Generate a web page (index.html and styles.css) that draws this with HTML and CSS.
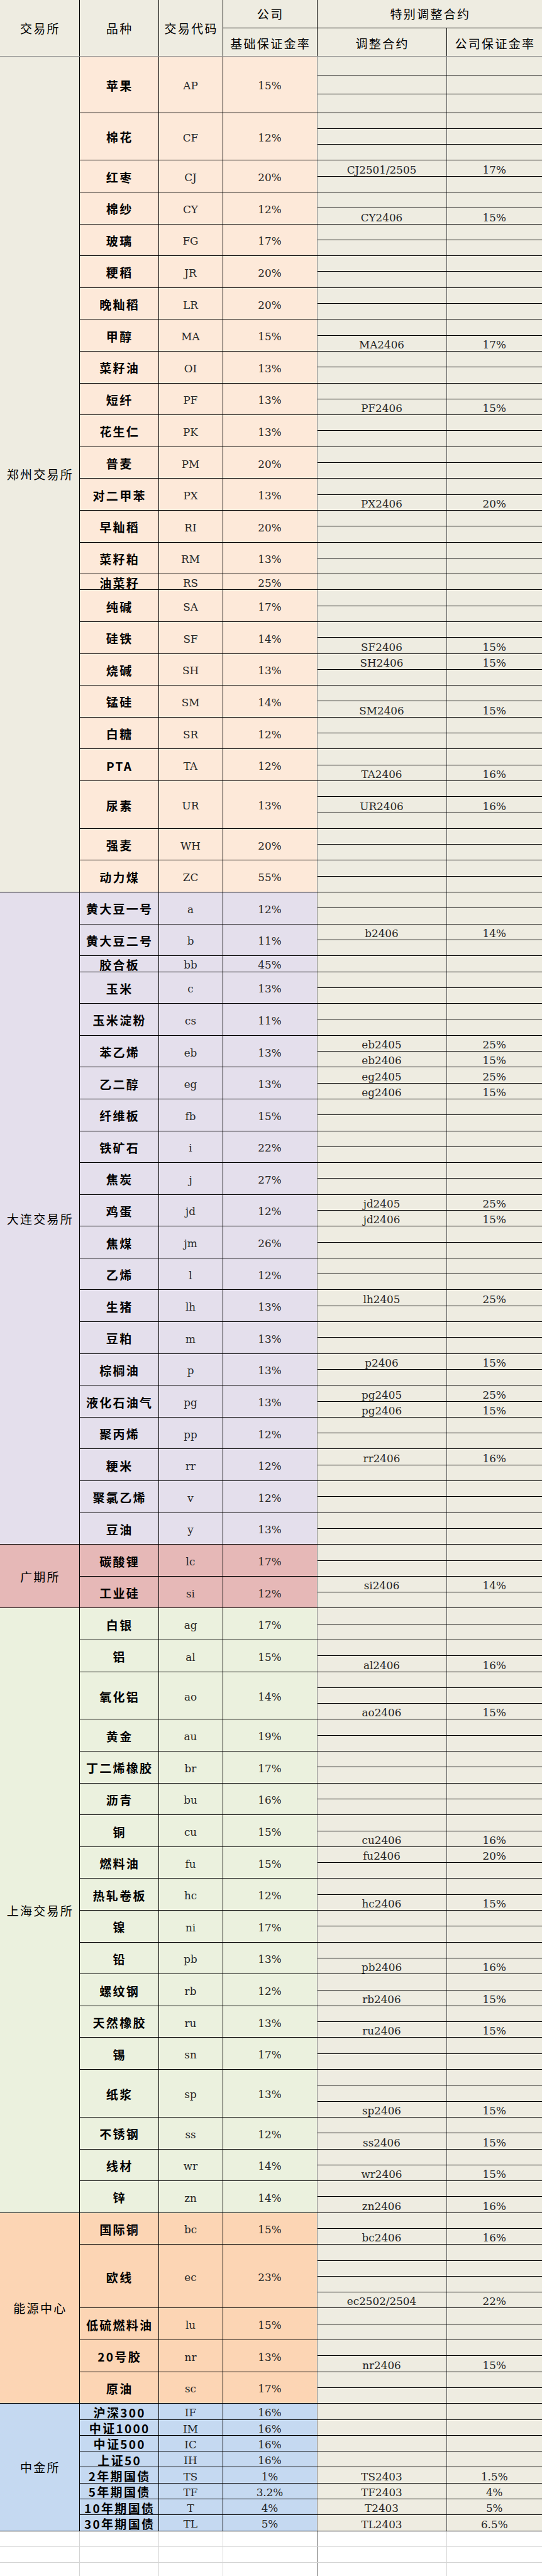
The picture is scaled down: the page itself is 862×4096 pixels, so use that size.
FILE: index.html
```html
<!DOCTYPE html>
<html lang="zh-CN">
<head>
<meta charset="utf-8">
<title>保证金率</title>
<link rel="stylesheet" href="styles.css">
</head>
<body>
<table class="sheet">
<colgroup><col class="w1"><col class="w2"><col class="w3"><col class="w4"><col class="w5"><col class="w6"></colgroup>
<thead>
<tr class="h1"><th rowspan="2" class="first low">交易所</th><th rowspan="2" class="low">品种</th><th rowspan="2" class="low">交易代码</th><th>公司</th><th colspan="2" class="last">特别调整合约</th></tr>
<tr class="h2"><th class="low sub">基础保证金率</th><th class="low sub">调整合约</th><th class="low sub last">公司保证金率</th></tr>
</thead>
<tbody class="g zz">
<tr class="ra"><td rowspan="52">郑州交易所</td><td rowspan="3">苹果</td><td rowspan="3">AP</td><td rowspan="3">15%</td><td></td><td></td></tr>
<tr class="ra"><td></td><td></td></tr>
<tr class="ra"><td></td><td></td></tr>
<tr><td rowspan="3">棉花</td><td rowspan="3">CF</td><td rowspan="3">12%</td><td></td><td></td></tr>
<tr><td></td><td></td></tr>
<tr><td></td><td></td></tr>
<tr><td rowspan="2">红枣</td><td rowspan="2">CJ</td><td rowspan="2">20%</td><td>CJ2501/2505</td><td>17%</td></tr>
<tr><td></td><td></td></tr>
<tr><td rowspan="2">棉纱</td><td rowspan="2">CY</td><td rowspan="2">12%</td><td></td><td></td></tr>
<tr><td>CY2406</td><td>15%</td></tr>
<tr><td rowspan="2">玻璃</td><td rowspan="2">FG</td><td rowspan="2">17%</td><td></td><td></td></tr>
<tr><td></td><td></td></tr>
<tr><td rowspan="2">粳稻</td><td rowspan="2">JR</td><td rowspan="2">20%</td><td></td><td></td></tr>
<tr><td></td><td></td></tr>
<tr><td rowspan="2">晚籼稻</td><td rowspan="2">LR</td><td rowspan="2">20%</td><td></td><td></td></tr>
<tr><td></td><td></td></tr>
<tr><td rowspan="2">甲醇</td><td rowspan="2">MA</td><td rowspan="2">15%</td><td></td><td></td></tr>
<tr><td>MA2406</td><td>17%</td></tr>
<tr><td rowspan="2">菜籽油</td><td rowspan="2">OI</td><td rowspan="2">13%</td><td></td><td></td></tr>
<tr><td></td><td></td></tr>
<tr><td rowspan="2">短纤</td><td rowspan="2">PF</td><td rowspan="2">13%</td><td></td><td></td></tr>
<tr><td>PF2406</td><td>15%</td></tr>
<tr><td rowspan="2">花生仁</td><td rowspan="2">PK</td><td rowspan="2">13%</td><td></td><td></td></tr>
<tr><td></td><td></td></tr>
<tr><td rowspan="2">普麦</td><td rowspan="2">PM</td><td rowspan="2">20%</td><td></td><td></td></tr>
<tr><td></td><td></td></tr>
<tr><td rowspan="2">对二甲苯</td><td rowspan="2">PX</td><td rowspan="2">13%</td><td></td><td></td></tr>
<tr><td>PX2406</td><td>20%</td></tr>
<tr><td rowspan="2">早籼稻</td><td rowspan="2">RI</td><td rowspan="2">20%</td><td></td><td></td></tr>
<tr><td></td><td></td></tr>
<tr><td rowspan="2">菜籽粕</td><td rowspan="2">RM</td><td rowspan="2">13%</td><td></td><td></td></tr>
<tr><td></td><td></td></tr>
<tr><td>油菜籽</td><td>RS</td><td>25%</td><td></td><td></td></tr>
<tr><td rowspan="2">纯碱</td><td rowspan="2">SA</td><td rowspan="2">17%</td><td></td><td></td></tr>
<tr><td></td><td></td></tr>
<tr><td rowspan="2">硅铁</td><td rowspan="2">SF</td><td rowspan="2">14%</td><td></td><td></td></tr>
<tr><td>SF2406</td><td>15%</td></tr>
<tr><td rowspan="2">烧碱</td><td rowspan="2">SH</td><td rowspan="2">13%</td><td>SH2406</td><td>15%</td></tr>
<tr><td></td><td></td></tr>
<tr><td rowspan="2">锰硅</td><td rowspan="2">SM</td><td rowspan="2">14%</td><td></td><td></td></tr>
<tr><td>SM2406</td><td>15%</td></tr>
<tr><td rowspan="2">白糖</td><td rowspan="2">SR</td><td rowspan="2">12%</td><td></td><td></td></tr>
<tr><td></td><td></td></tr>
<tr><td rowspan="2">PTA</td><td rowspan="2">TA</td><td rowspan="2">12%</td><td></td><td></td></tr>
<tr><td>TA2406</td><td>16%</td></tr>
<tr><td rowspan="3">尿素</td><td rowspan="3">UR</td><td rowspan="3">13%</td><td></td><td></td></tr>
<tr><td>UR2406</td><td>16%</td></tr>
<tr><td></td><td></td></tr>
<tr><td rowspan="2">强麦</td><td rowspan="2">WH</td><td rowspan="2">20%</td><td></td><td></td></tr>
<tr><td></td><td></td></tr>
<tr><td rowspan="2">动力煤</td><td rowspan="2">ZC</td><td rowspan="2">55%</td><td></td><td></td></tr>
<tr><td></td><td></td></tr>
</tbody>
<tbody class="g dl">
<tr><td rowspan="41">大连交易所</td><td rowspan="2">黄大豆一号</td><td rowspan="2">a</td><td rowspan="2">12%</td><td></td><td></td></tr>
<tr><td></td><td></td></tr>
<tr><td rowspan="2">黄大豆二号</td><td rowspan="2">b</td><td rowspan="2">11%</td><td>b2406</td><td>14%</td></tr>
<tr><td></td><td></td></tr>
<tr><td>胶合板</td><td>bb</td><td>45%</td><td></td><td></td></tr>
<tr><td rowspan="2">玉米</td><td rowspan="2">c</td><td rowspan="2">13%</td><td></td><td></td></tr>
<tr><td></td><td></td></tr>
<tr><td rowspan="2">玉米淀粉</td><td rowspan="2">cs</td><td rowspan="2">11%</td><td></td><td></td></tr>
<tr><td></td><td></td></tr>
<tr><td rowspan="2">苯乙烯</td><td rowspan="2">eb</td><td rowspan="2">13%</td><td>eb2405</td><td>25%</td></tr>
<tr><td>eb2406</td><td>15%</td></tr>
<tr><td rowspan="2">乙二醇</td><td rowspan="2">eg</td><td rowspan="2">13%</td><td>eg2405</td><td>25%</td></tr>
<tr><td>eg2406</td><td>15%</td></tr>
<tr><td rowspan="2">纤维板</td><td rowspan="2">fb</td><td rowspan="2">15%</td><td></td><td></td></tr>
<tr><td></td><td></td></tr>
<tr><td rowspan="2">铁矿石</td><td rowspan="2">i</td><td rowspan="2">22%</td><td></td><td></td></tr>
<tr><td></td><td></td></tr>
<tr><td rowspan="2">焦炭</td><td rowspan="2">j</td><td rowspan="2">27%</td><td></td><td></td></tr>
<tr><td></td><td></td></tr>
<tr><td rowspan="2">鸡蛋</td><td rowspan="2">jd</td><td rowspan="2">12%</td><td>jd2405</td><td>25%</td></tr>
<tr><td>jd2406</td><td>15%</td></tr>
<tr><td rowspan="2">焦煤</td><td rowspan="2">jm</td><td rowspan="2">26%</td><td></td><td></td></tr>
<tr><td></td><td></td></tr>
<tr><td rowspan="2">乙烯</td><td rowspan="2">l</td><td rowspan="2">12%</td><td></td><td></td></tr>
<tr><td></td><td></td></tr>
<tr><td rowspan="2">生猪</td><td rowspan="2">lh</td><td rowspan="2">13%</td><td>lh2405</td><td>25%</td></tr>
<tr><td></td><td></td></tr>
<tr><td rowspan="2">豆粕</td><td rowspan="2">m</td><td rowspan="2">13%</td><td></td><td></td></tr>
<tr><td></td><td></td></tr>
<tr><td rowspan="2">棕榈油</td><td rowspan="2">p</td><td rowspan="2">13%</td><td>p2406</td><td>15%</td></tr>
<tr><td></td><td></td></tr>
<tr><td rowspan="2">液化石油气</td><td rowspan="2">pg</td><td rowspan="2">13%</td><td>pg2405</td><td>25%</td></tr>
<tr><td>pg2406</td><td>15%</td></tr>
<tr><td rowspan="2">聚丙烯</td><td rowspan="2">pp</td><td rowspan="2">12%</td><td></td><td></td></tr>
<tr><td></td><td></td></tr>
<tr><td rowspan="2">粳米</td><td rowspan="2">rr</td><td rowspan="2">12%</td><td>rr2406</td><td>16%</td></tr>
<tr><td></td><td></td></tr>
<tr><td rowspan="2">聚氯乙烯</td><td rowspan="2">v</td><td rowspan="2">12%</td><td></td><td></td></tr>
<tr><td></td><td></td></tr>
<tr><td rowspan="2">豆油</td><td rowspan="2">y</td><td rowspan="2">13%</td><td></td><td></td></tr>
<tr><td></td><td></td></tr>
</tbody>
<tbody class="g gz">
<tr><td rowspan="4">广期所</td><td rowspan="2">碳酸锂</td><td rowspan="2">lc</td><td rowspan="2">17%</td><td></td><td></td></tr>
<tr><td></td><td></td></tr>
<tr><td rowspan="2">工业硅</td><td rowspan="2">si</td><td rowspan="2">12%</td><td>si2406</td><td>14%</td></tr>
<tr><td></td><td></td></tr>
</tbody>
<tbody class="g sh">
<tr><td rowspan="38">上海交易所</td><td rowspan="2">白银</td><td rowspan="2">ag</td><td rowspan="2">17%</td><td></td><td></td></tr>
<tr><td></td><td></td></tr>
<tr><td rowspan="2">铝</td><td rowspan="2">al</td><td rowspan="2">15%</td><td></td><td></td></tr>
<tr><td>al2406</td><td>16%</td></tr>
<tr><td rowspan="3">氧化铝</td><td rowspan="3">ao</td><td rowspan="3">14%</td><td></td><td></td></tr>
<tr><td></td><td></td></tr>
<tr><td>ao2406</td><td>15%</td></tr>
<tr><td rowspan="2">黄金</td><td rowspan="2">au</td><td rowspan="2">19%</td><td></td><td></td></tr>
<tr><td></td><td></td></tr>
<tr><td rowspan="2">丁二烯橡胶</td><td rowspan="2">br</td><td rowspan="2">17%</td><td></td><td></td></tr>
<tr><td></td><td></td></tr>
<tr><td rowspan="2">沥青</td><td rowspan="2">bu</td><td rowspan="2">16%</td><td></td><td></td></tr>
<tr><td></td><td></td></tr>
<tr><td rowspan="2">铜</td><td rowspan="2">cu</td><td rowspan="2">15%</td><td></td><td></td></tr>
<tr><td>cu2406</td><td>16%</td></tr>
<tr><td rowspan="2">燃料油</td><td rowspan="2">fu</td><td rowspan="2">15%</td><td>fu2406</td><td>20%</td></tr>
<tr><td></td><td></td></tr>
<tr><td rowspan="2">热轧卷板</td><td rowspan="2">hc</td><td rowspan="2">12%</td><td></td><td></td></tr>
<tr><td>hc2406</td><td>15%</td></tr>
<tr><td rowspan="2">镍</td><td rowspan="2">ni</td><td rowspan="2">17%</td><td></td><td></td></tr>
<tr><td></td><td></td></tr>
<tr><td rowspan="2">铅</td><td rowspan="2">pb</td><td rowspan="2">13%</td><td></td><td></td></tr>
<tr><td>pb2406</td><td>16%</td></tr>
<tr><td rowspan="2">螺纹钢</td><td rowspan="2">rb</td><td rowspan="2">12%</td><td></td><td></td></tr>
<tr><td>rb2406</td><td>15%</td></tr>
<tr><td rowspan="2">天然橡胶</td><td rowspan="2">ru</td><td rowspan="2">13%</td><td></td><td></td></tr>
<tr><td>ru2406</td><td>15%</td></tr>
<tr><td rowspan="2">锡</td><td rowspan="2">sn</td><td rowspan="2">17%</td><td></td><td></td></tr>
<tr><td></td><td></td></tr>
<tr><td rowspan="3">纸浆</td><td rowspan="3">sp</td><td rowspan="3">13%</td><td></td><td></td></tr>
<tr><td></td><td></td></tr>
<tr><td>sp2406</td><td>15%</td></tr>
<tr><td rowspan="2">不锈钢</td><td rowspan="2">ss</td><td rowspan="2">12%</td><td></td><td></td></tr>
<tr><td>ss2406</td><td>15%</td></tr>
<tr><td rowspan="2">线材</td><td rowspan="2">wr</td><td rowspan="2">14%</td><td></td><td></td></tr>
<tr><td>wr2406</td><td>15%</td></tr>
<tr><td rowspan="2">锌</td><td rowspan="2">zn</td><td rowspan="2">14%</td><td></td><td></td></tr>
<tr><td>zn2406</td><td>16%</td></tr>
</tbody>
<tbody class="g ine">
<tr><td rowspan="12">能源中心</td><td rowspan="2">国际铜</td><td rowspan="2">bc</td><td rowspan="2">15%</td><td></td><td></td></tr>
<tr><td>bc2406</td><td>16%</td></tr>
<tr><td rowspan="4">欧线</td><td rowspan="4">ec</td><td rowspan="4">23%</td><td></td><td></td></tr>
<tr><td></td><td></td></tr>
<tr><td></td><td></td></tr>
<tr><td>ec2502/2504</td><td>22%</td></tr>
<tr><td rowspan="2">低硫燃料油</td><td rowspan="2">lu</td><td rowspan="2">15%</td><td></td><td></td></tr>
<tr><td></td><td></td></tr>
<tr><td rowspan="2">20号胶</td><td rowspan="2">nr</td><td rowspan="2">13%</td><td></td><td></td></tr>
<tr><td>nr2406</td><td>15%</td></tr>
<tr><td rowspan="2">原油</td><td rowspan="2">sc</td><td rowspan="2">17%</td><td></td><td></td></tr>
<tr><td></td><td></td></tr>
</tbody>
<tbody class="g cf">
<tr><td rowspan="8">中金所</td><td>沪深300</td><td>IF</td><td>16%</td><td></td><td></td></tr>
<tr><td>中证1000</td><td>IM</td><td>16%</td><td></td><td></td></tr>
<tr><td>中证500</td><td>IC</td><td>16%</td><td></td><td></td></tr>
<tr><td>上证50</td><td>IH</td><td>16%</td><td></td><td></td></tr>
<tr><td>2年期国债</td><td>TS</td><td>1%</td><td>TS2403</td><td>1.5%</td></tr>
<tr><td>5年期国债</td><td>TF</td><td>3.2%</td><td>TF2403</td><td>4%</td></tr>
<tr><td>10年期国债</td><td>T</td><td>4%</td><td>T2403</td><td>5%</td></tr>
<tr><td>30年期国债</td><td>TL</td><td>5%</td><td>TL2403</td><td>6.5%</td></tr>
</tbody>
<tbody class="blank">
<tr><td></td><td></td><td></td><td></td><td></td><td></td></tr>
<tr><td></td><td></td><td></td><td></td><td></td><td></td></tr>
<tr><td></td><td></td><td></td><td></td><td></td><td></td></tr>
</tbody>
</table>
</body>
</html>
```

FILE: styles.css
```css
html, body {
  margin: 0;
  padding: 0;
  background: #ffffff;
}

.sheet {
  width: 862px;
  border-collapse: collapse;
  table-layout: fixed;
  font-family: "Noto Sans CJK SC", sans-serif;
  color: #000000;
}

.w1 { width: 126px; }
.w2 { width: 126px; }
.w3 { width: 102px; }
.w4 { width: 150px; }
.w5 { width: 206px; }
.w6 { width: 152px; }

.sheet th,
.sheet td {
  padding: 0;
  border: 1px solid #000000;
  text-align: center;
  vertical-align: middle;
  white-space: nowrap;
  line-height: 19px;
}

/* header */
.sheet th {
  background: #eeece1;
  font-weight: 400;
  font-size: 19px;
  letter-spacing: 2.3px;
  text-indent: 2.3px;
  border-top: none;
}
.sheet .h1 { height: 44px; }
.sheet .h2 { height: 45px; }
.sheet th.first { border-left: none; }
.sheet th.last { border-right: none; }
.sheet th.low { border-bottom-color: #8c8c8c; }
.sheet th.sub { padding-top: 3px; }

/* body groups */
.g tr { height: 25.3px; }
.g tr.ra { height: 30px; }

/* exchange name */
.g td:nth-last-child(6) {
  border-left: none;
  font-size: 19px;
  letter-spacing: 2.3px;
  text-indent: 2.3px;
}

/* product name */
.g td:nth-last-child(5) {
  font-weight: 700;
  font-size: 19px;
  letter-spacing: 2.3px;
  text-indent: 2.3px;
  padding-top: 2px;
}

/* code + base margin */
.g td:nth-last-child(4),
.g td:nth-last-child(3) {
  font-family: "DejaVu Serif", serif;
  font-size: 16.8px;
  color: #262626;
  padding-top: 5px;
}
.g td:nth-last-child(3) { border-right-color: #8c8c8c; }

/* adjusted contract + company margin */
.g td:nth-last-child(2),
.g td:last-child {
  background: #eeece1;
  font-family: "DejaVu Serif", serif;
  font-size: 16.8px;
  color: #262626;
  vertical-align: bottom;
}
.g td:nth-last-child(2) { border-right-color: #595959; }
.g td:last-child { border-right: none; }

/* exchange colours */
.zz td { background: #fde9d9; }
.zz td:nth-last-child(6) { background: #eeece1; }
.dl td { background: #e4dfec; }
.gz td { background: #e6b8b7; }
.sh td { background: #ebf1de; }
.ine td { background: #fcd5b4; }
.cf td { background: #c5d9f1; }

/* empty sheet rows below */
.blank tr { height: 25.3px; }
.blank td {
  border-color: #d4d4d4;
  background: #ffffff;
}
.blank td:first-child { border-left: none; }
.blank td:last-child { border-right: none; }
.blank td:nth-child(4) { border-right-color: #6e6e6e; }
```
